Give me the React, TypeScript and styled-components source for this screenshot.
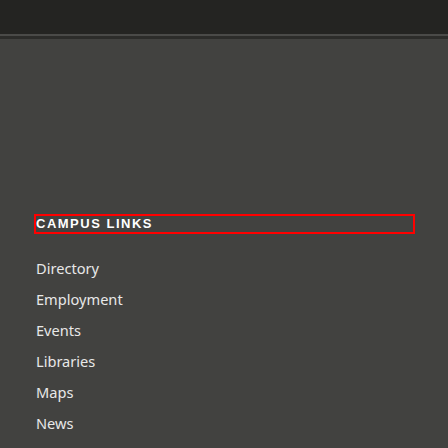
import React from "react";
import styled, { createGlobalStyle } from "styled-components";

const Global = createGlobalStyle`
  html, body {
    margin: 0;
    padding: 0;
    background: #424240;
  }
  body {
    font-family: "Noto Sans", "Liberation Sans", sans-serif;
  }
`;

const Page = styled.div`
  min-height: 448px;
  background: #424240;
  display: flex;
  flex-direction: column;
`;

const TopBar = styled.header`
  height: 34px;
  background: #242422;
  border-bottom: 2px solid #4a4a48;
`;

const Shade = styled.div`
  height: 3px;
  background: #2c2c2a;
`;

const Main = styled.main`
  padding: 177px 35px 0 36px;
  display: flex;
  flex-direction: column;
`;

const Heading = styled.h2`
  margin: 0;
  font-family: "Liberation Sans", Arial, sans-serif;
  font-weight: 700;
  font-size: 13px;
  line-height: 16px;
  letter-spacing: 1.5px;
  text-transform: uppercase;
  color: #ffffff;
  outline: 2px solid #ff0000;
`;

const LinkList = styled.ul`
  list-style: none;
  margin: 21px 0 0;
  padding: 0;
  display: flex;
  flex-direction: column;
`;

const LinkItem = styled.li`
  font-family: "Noto Sans", sans-serif;
  font-size: 14.6px;
  font-weight: 400;
  line-height: 31px;
  color: #e8e8e8;
`;

const links = ["Directory", "Employment", "Events", "Libraries", "Maps", "News"];

export default function App() {
  return (
    <Page>
      <Global />
      <TopBar />
      <Shade />
      <Main>
        <Heading>Campus Links</Heading>
        <LinkList>
          {links.map((l) => (
            <LinkItem key={l}>{l}</LinkItem>
          ))}
        </LinkList>
      </Main>
    </Page>
  );
}
